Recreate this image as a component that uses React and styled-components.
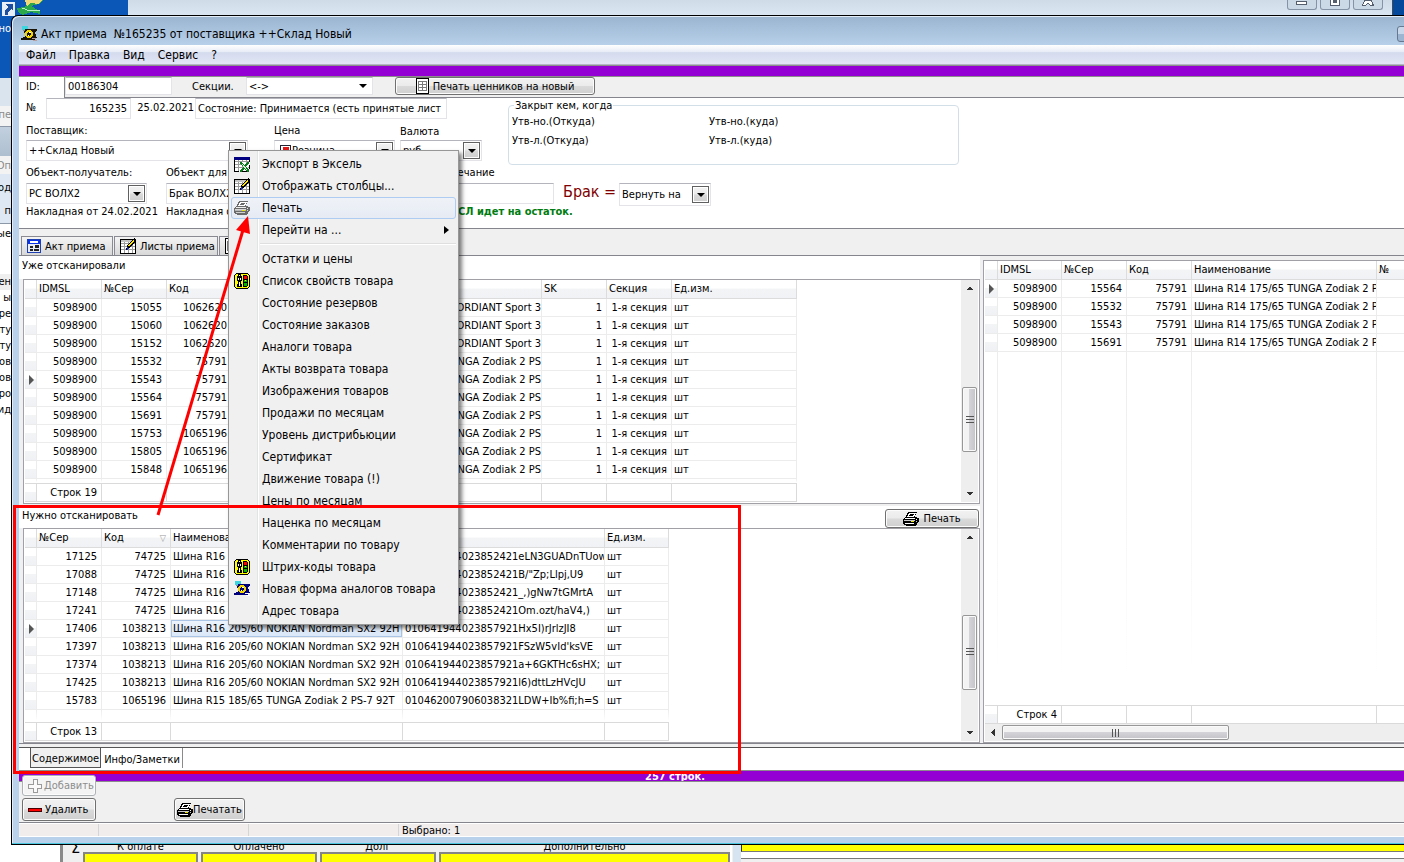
import React from 'react';
import styled, { createGlobalStyle, css } from 'styled-components';

const GlobalStyle = createGlobalStyle`
    * {
        box-sizing: border-box;
    }

    body {
        margin: 0;
        overflow: hidden;
        background: #fff;
    }

    body, button, input, select {
        font-family: 'DejaVu Sans Condensed', 'DejaVu Sans', 'Noto Sans', sans-serif;
        font-size: 11px;
        color: #000;
    }
`;

const face = 'linear-gradient(#f2f2f2 0%, #ebebeb 48%, #dadada 52%, #cfcfcf 100%)';

/* ---------- data ---------- */

const scannedColumns = [
    { title: 'IDMSL', width: 65, right: true },
    { title: '№Сер', width: 65, right: true },
    { title: 'Код', width: 65, right: true },
    { title: 'Наименование', width: 310, tail: true },
    { title: 'SK', width: 65, right: true },
    { title: 'Секция', width: 65, right: true },
    { title: 'Ед.изм.', width: 125 },
];

const cordiant = 'Шина R16 205/55 91T CORDIANT Sport 3';
const tunga = 'Шина R14 175/65 TUNGA Zodiak 2 PS';

const scannedRows = [
    ['15055', '1062620', cordiant],
    ['15060', '1062620', cordiant],
    ['15152', '1062620', cordiant],
    ['15532', '75791', tunga],
    ['15543', '75791', tunga],
    ['15564', '75791', tunga],
    ['15691', '75791', tunga],
    ['15753', '1065196', tunga],
    ['15805', '1065196', tunga],
    ['15848', '1065196', tunga],
].map(([serial, code, name]) => ['5098900', serial, code, name, '1', '1-я секция', 'шт']);

const pendingColumns = [
    { title: '№Сер', width: 65, right: true },
    { title: 'Код', width: 69, right: true, sorted: true },
    { title: 'Наименование', width: 232 },
    { title: 'SK', width: 202 },
    { title: 'Ед.изм.', width: 64 },
];

const nokian = 'Шина R16 205/60 NOKIAN Nordman SX2 92H';

const pendingRows = [
    ['17125', '74725', nokian, '010641944023852421eLN3GUADnTUow', 'шт'],
    ['17088', '74725', nokian, '010641944023852421B/"Zp;Llpj,U9', 'шт'],
    ['17148', '74725', nokian, '010641944023852421_,)gNw7tGMrtA', 'шт'],
    ['17241', '74725', nokian, '010641944023852421Om.ozt/haV4,)', 'шт'],
    ['17406', '1038213', nokian, '010641944023857921Hx5I)rJrlzJI8', 'шт'],
    ['17397', '1038213', nokian, "010641944023857921FSzW5vId'ksVE", 'шт'],
    ['17374', '1038213', nokian, '010641944023857921a+6GKTHc6sHX;', 'шт'],
    ['17425', '1038213', nokian, '010641944023857921l6)dttLzHVcJU', 'шт'],
    ['15783', '1065196', 'Шина R15 185/65 TUNGA Zodiak 2 PS-7 92T', '010462007906038321LDW+Ib%fi;h=S', 'шт'],
];

const sheetColumns = [
    { title: 'IDMSL', width: 64, right: true },
    { title: '№Сер', width: 65, right: true },
    { title: 'Код', width: 65, right: true },
    { title: 'Наименование', width: 185 },
    { title: '№', width: 120 },
];

const sheetRows = ['15564', '15532', '15543', '15691'].map((serial) => ['5098900', serial, '75791', tunga, '']);

const menuItems = [
    { text: 'Экспорт в Эксель', icon: 'excel' },
    { text: 'Отображать столбцы...', icon: 'columns' },
    { text: 'Печать', icon: 'printerGray', active: true },
    { text: 'Перейти на ...', submenu: true },
    null,
    { text: 'Остатки и цены' },
    { text: 'Список свойств товара', icon: 'props' },
    { text: 'Состояние резервов' },
    { text: 'Состояние заказов' },
    { text: 'Аналоги товара' },
    { text: 'Акты возврата товара' },
    { text: 'Изображения товаров' },
    { text: 'Продажи по месяцам' },
    { text: 'Уровень дистрибьюции' },
    { text: 'Сертификат' },
    { text: 'Движение товара (!)' },
    { text: 'Цены по месяцам' },
    { text: 'Наценка по месяцам' },
    { text: 'Комментарии по товару' },
    { text: 'Штрих-коды товара', icon: 'props' },
    { text: 'Новая форма аналогов товара', icon: 'analog' },
    { text: 'Адрес товара' },
];

const backLines = ['ен', 'ы', 'ре', 'ту', 'ту', 'ов', 'ов', 'ро', 'вид'];

/* ---------- icons ---------- */

const Svg = styled.svg`
    display: block;
    flex: none;
    shape-rendering: crispEdges;
`;

function Printer({ gray }) {
    const ink = gray ? '#6a6a6a' : '#000';
    return (
        <Svg width="16" height="14" viewBox="0 0 16 14">
            <path d="M5 0h9v1h-1v2h-1v2h2v1h2v4h-1v1h-1v2h-1v1H3v-1H1v-1H0V7h1V6h1V5h1V3h1V1h1z" fill={ink} />
            <path d="M6 1h7v1h-1v2h-1v1H4V4h1V2h1z" fill="#fff" />
            <path d="M7 2h4v1H7zM6 3h4v1H6z" fill={ink} />
            <path d="M2 6h10v1H2zM13 7h1v1h-1z" fill={gray ? '#eee' : '#fff'} />
            <path d="M1 8h11v1H1zM13 9h1v1h-1z" fill={gray ? '#d8d8d8' : '#c8c8c8'} />
            <path d="M1 9h11v1H1z" fill={gray ? '#b4b4b4' : '#000'} />
            <path d="M2 11h9v1H2z" fill={gray ? '#d0d0d0' : '#fff'} />
            <path d="M8 9h3v1H8z" fill="#e6e200" />
        </Svg>
    );
}

function SheetGrid() {
    return (
        <>
            <path d="M0 1h16v15H0z" fill="#000" />
            <path d="M1 2h14v13H1z" fill="#fff" />
            <path d="M1 5h14v1H1zM1 8h14v1H1zM1 11h14v1H1zM4 2h1v13H4zM8 2h1v13H8zM12 2h1v13h-1z" fill="#9a9a9a" />
        </>
    );
}

function ExcelIcon() {
    return (
        <Svg width="16" height="16" viewBox="0 0 16 16">
            <SheetGrid />
            <path d="M0 1h16v3H0z" fill="#000080" />
            <path d="M5 6h3l3 3 3-3h2v2l-3 3 3 3v2h-3l-3-3-3 3H5v-1l4-4-4-4z" fill="#fff" />
            <path d="M6 6h2l2 3 3-3h2v1l-3 4 3 3v2h-2l-3-3-3 3H6v-1l3-4-3-4z" fill="#0a7a1c" />
            <path d="M8 8l5 6" stroke="#d8f0d8" />
        </Svg>
    );
}

function ColumnsIcon() {
    return (
        <Svg width="16" height="16" viewBox="0 0 16 16">
            <SheetGrid />
            <path d="M1 2h14v2H1z" fill="#c4c4c4" />
            <path d="M14 0l2 1v2l-7 8-3 1 1-4z" fill="#000" />
            <path d="M13 2l1 1-5 6-1-1z" fill="#ffe600" />
            <path d="M7 9l2 2-2 1z" fill="#1a2ccc" />
        </Svg>
    );
}

function PropsIcon() {
    return (
        <Svg width="16" height="16" viewBox="0 0 16 16">
            <path d="M2 0h12v1h1v1h1v12h-1v1h-1v1H2v-1H1v-1H0V2h1V1h1z" fill="#000" />
            <path d="M2 1h12v1h1v12h-1v1H2v-1H1V2h1z" fill="#ff0" />
            <path d="M4 1h3v2h1v5H7v3h1v3H3v-3h1V8H3V3h1z" fill="#000" />
            <path d="M5 2h1v1H5zM4 5h1v2H4zM6 5h1v2H6zM5 9h1v4H5z" fill="#fff" />
            <path d="M9 2h4v1h1v10h-1v1H9z" fill="#000" />
            <path d="M10 3h3v3h-3z" fill="#f00" />
            <path d="M10 7h3v2h-3z" fill="#0b0" />
            <path d="M10 10h3v3h-3z" fill="#0b0" />
            <path d="M11 7h1v1h-1z" fill="#ff0" />
        </Svg>
    );
}

function AnalogIcon({ dark }) {
    const ink = dark ? '#1a1408' : '#00007a';
    return (
        <Svg width="16" height="16" viewBox="0 0 16 16">
            <path d="M1 0h6v4H1z" fill="#3fd5de" />
            <path d="M2 4h6v1H2z" fill="#888" />
            <path d="M4 3h12v2h-1v1h-1v2h1v3h1v1h-5v2H0v-2h2v-1h2V7H3V5h1z" fill={ink} />
            <circle cx="8" cy="8" r="4" fill="#f3d500" />
            <circle cx="8" cy="8" r="2" fill={ink} />
            <path d="M8 6h2v1H8zM7 9h1v1H7z" fill="#fff" />
            <path d="M11 12h4v1h-4zM12 14h4v1h-4z" fill={dark ? '#b9a0a0' : '#fff'} />
            <path d="M11 13h3v1h-3z" fill={ink} />
        </Svg>
    );
}

function FormIcon() {
    return (
        <Svg width="14" height="14" viewBox="0 0 14 14">
            <path d="M0 0h14v14H0z" fill="#1d3fb0" />
            <path d="M1 1h12v4H1z" fill="#0a32e8" />
            <path d="M1 5h12v8H1z" fill="#e8ecf4" />
            <path d="M3 2h8v2H3z" fill="#fff" />
            <path d="M3 7h3v2H3zM8 6h4v3H8zM3 10h3v2H3zM7 10h5v2H7z" fill="#222" />
        </Svg>
    );
}

function ListIcon() {
    return (
        <Svg width="13" height="16" viewBox="0 0 13 16">
            <path d="M0 0h13v16H0z" fill="#000" />
            <path d="M1 1h11v14H1z" fill="#fff" />
            <path d="M2 3h9v10H2z" fill="#7a7a7a" />
            <path d="M3 4h3v2H3zM7 4h3v2H7zM3 7h3v2H3zM7 7h3v2H7zM3 10h3v2H3zM7 10h3v2H7z" fill="#fff" />
        </Svg>
    );
}

function PriceIcon() {
    return (
        <Svg width="11" height="12" viewBox="0 0 11 12">
            <path d="M0 0h11v12H0z" fill="#223" />
            <path d="M1 1h9v10H1z" fill="#fff" />
            <path d="M3 2h6v3H3z" fill="#e01818" />
            <path d="M2 6h2v1H2zM5 6h4v1H5z" fill="#2444aa" />
        </Svg>
    );
}

function PlusIcon() {
    return (
        <Svg width="14" height="14" viewBox="0 0 14 14">
            <path d="M5 .5h4V5h4.500v4H9v4.500H5V9H.5V5H5z" fill="#fafafa" stroke="#9a9a9a" />
        </Svg>
    );
}

function MinusIcon() {
    return (
        <Svg width="14" height="4" viewBox="0 0 14 4">
            <path d="M0 0h14v4H0z" fill="#400" />
            <path d="M1 1h12v2H1z" fill="#f00" />
        </Svg>
    );
}

const menuIcons = {
    excel: <ExcelIcon />,
    columns: <ColumnsIcon />,
    printerGray: <Printer gray />,
    props: <PropsIcon />,
    analog: <AnalogIcon />,
};

/* ---------- desktop and windows behind ---------- */

const Desktop = styled.main`
    position: relative;
    min-height: 100vh;
    overflow: hidden;
    background: linear-gradient(90deg, #0a57b8 0%, #0a57b8 50%, #03489b 100%);
`;

const Shortcut = styled.div`
    position: absolute;
    left: 0;
    top: 0;
    width: 60px;
`;

const ShortcutName = styled.div`
    padding-top: 4px;
    width: 11px;
    overflow: hidden;
    white-space: nowrap;
    display: flex;
    justify-content: flex-end;
    color: #fff;
`;

const TopWindow = styled.section`
    position: absolute;
    left: 128px;
    right: 11px;
    top: 0;
    height: 20px;
    display: flex;
    justify-content: flex-end;
    gap: 3px;
    padding-right: 9px;
    background: linear-gradient(#cfdce8, #dbe7f2 80%);
    border-right: 1px solid #3c4b5c;
`;

const CaptionButton = styled.button`
    width: 30px;
    height: 10px;
    padding: 0;
    display: flex;
    justify-content: center;
    flex: none;
    background: #cbd9e6;
    border: 1px solid #8593a6;
    border-top: 0;
    border-radius: 0 0 3px 3px;
`;

const SideWindow = styled.section`
    position: absolute;
    left: 0;
    top: 78px;
    bottom: 0;
    width: 60px;
    background: #fff;
    display: flex;
    flex-direction: column;
`;

const SideText = styled.div`
    width: 11px;
    height: ${(p) => p.$height}px;
    padding-bottom: ${(p) => p.$below || 0}px;
    flex: none;
    display: flex;
    align-items: flex-end;
    justify-content: flex-end;
    overflow: hidden;
    white-space: nowrap;
    line-height: 16px;
    background: ${(p) => p.$bg || '#fff'};
    color: ${(p) => p.$color || '#000'};
    border-bottom: ${(p) => (p.$line ? '1px solid #8c98a8' : '0')};
`;

const BottomWindow = styled.section`
    position: absolute;
    left: 60px;
    right: 0;
    bottom: 0;
    height: 24px;
    display: flex;
    background: #f0f0f0;
    border-left: 1px solid #8a8a8a;
`;

const Totals = styled.div`
    flex: 0 0 671px;
    display: grid;
    grid-template-columns: 15px 115px 116px 116px 291px;
    gap: 3px;
    padding: 0 0 0 2px;
    border-left: 2px solid #8a8a8a;
    border-right: 2px solid #fff;
`;

const Total = styled.label`
    display: flex;
    flex-direction: column;
    text-align: center;
    line-height: 18px;
    white-space: nowrap;

    input {
        width: 100%;
        height: 14px;
        margin: -4px 0 0;
        background: #ff0;
        border: 2px solid #858585;
        border-bottom: 0;
    }
`;

const Sigma = styled.div`
    padding-top: 1px;
    font-size: 16px;
    line-height: 18px;
    text-align: right;
`;

const BottomRight = styled.div`
    flex: 1;
    margin-left: 1px;
    border-left: 8px solid #d6e3f1;

    &::before {
        content: '';
        display: block;
        height: 13px;
        background: #ff0;
        border-left: 1px solid #333;
        border-bottom: 1px solid #777;
    }

    &::after {
        content: '';
        display: block;
        height: 6px;
        background: #fff;
        border-bottom: 1px solid #777;
    }
`;

/* ---------- main window ---------- */

const Window = styled.section`
    position: absolute;
    left: 11px;
    right: 0;
    top: 15px;
    bottom: 17px;
    display: flex;
    flex-direction: column;
    padding: 0 0 7px 7px;
    background: linear-gradient(#9ab4d0 0, #b9d1ea 30px);
    border: 1px solid #000;
    border-right: 0;
    border-radius: 7px 0 0 0;
    box-shadow: inset 0 -1px #4cc9e0, inset 1px 1px #e4eef8;
`;

const TitleBar = styled.header`
    height: 29px;
    flex: none;
    display: flex;
    align-items: center;
    gap: 4px;
    padding: 6px 0 0 2px;
    overflow: hidden;

    h1 {
        margin: 0;
        flex: 1;
        font-size: 12px;
        font-weight: normal;
        white-space: pre;
    }

    button {
        height: 16px;
        border: 1px solid #65788f;
        border-radius: 3px;
        background: linear-gradient(#c8d8ea 48%, #9db5d0 52%);
        margin-right: -23px;
    }
`;

const Client = styled.div`
    flex: 1;
    min-height: 0;
    display: flex;
    flex-direction: column;
    background: #f0f0f0;
`;

const MenuBar = styled.nav`
    height: 20px;
    flex: none;
    display: flex;
    align-items: center;
    gap: 13px;
    padding-left: 7px;
    font-size: 12px;
    background: linear-gradient(#fff 0%, #e8ecf6 36%, #d4dbed 40%, #e1e5f5 95%);
    border-bottom: 1px solid #b4b8c6;

    button {
        padding: 0;
        border: 0;
        background: none;
        font-size: 12px;
    }
`;

const PurpleBar = styled.div`
    height: 12px;
    flex: none;
    overflow: hidden;
    background: #9400d3;
    border-top: 1px solid #8c8c8c;
    border-bottom: 1px solid #8c8c8c;
    padding-left: 626px;
    color: #fff;
    font-weight: bold;
    line-height: 11px;
`;

const IdBar = styled.div`
    height: 21px;
    flex: none;
    display: flex;
    align-items: flex-start;
    border-bottom: 1px solid #85858d;

    > label {
        line-height: 20px;
    }
`;

const IdTab = styled.label`
    width: 46px;
    height: 21px;
    padding-left: 7px;
    background: #fff;
    border-right: 1px solid #85858d;
`;

const Field = styled.input`
    width: ${(p) => p.$width}px;
    height: ${(p) => p.$height || 20}px;
    margin: 0;
    padding: 0 ${(p) => (p.$right ? 3 : 2)}px;
    flex: none;
    border: 1px solid #e3e3e8;
    border-top-color: #b4b4bc;
    background: #fff;
    text-align: ${(p) => (p.$right ? 'right' : 'left')};
`;

const SectionLabel = styled.label`
    margin: 0 12px 0 20px;
    width: 42px;
`;

const ComboFrame = styled.div`
    width: ${(p) => p.$width}px;
    height: ${(p) => p.$height || 20}px;
    flex: none;
    display: flex;
    align-items: center;
    padding: 0 1px;
    background: #fff;
    border: 1px solid #e3e3e8;
    border-top-color: #b4b4bc;

    select {
        flex: 1;
        min-width: 0;
        height: 100%;
        padding: 0 1px;
        appearance: none;
        border: 0;
        background: none;
        order: 1;
    }

    svg {
        margin-left: 4px;
    }
`;

const ArrowBox = styled.span`
    order: 2;
    width: 17px;
    height: 17px;
    flex: none;
    display: flex;
    align-items: center;
    justify-content: center;
    ${(p) =>
        !p.$flat &&
        css`
            border: 1px solid #606060;
            box-shadow: inset 0 0 0 1px #fff;
            background: ${face};
        `}

    &::after {
        content: '';
        border: 4px solid transparent;
        border-top: 4px solid #000;
        border-bottom: 0;
    }
`;

const PushButton = styled.button`
    width: ${(p) => p.$width}px;
    height: ${(p) => p.$height || 19}px;
    padding: 0 ${(p) => (p.$left ? 5 : 2)}px;
    flex: none;
    display: flex;
    align-items: center;
    justify-content: ${(p) => (p.$left ? 'flex-start' : 'center')};
    gap: ${(p) => p.$gap || 0}px;
    white-space: nowrap;
    border: 1px solid #707070;
    border-radius: 3px;
    box-shadow: inset 0 0 0 1px #fcfcfc;
    background: ${face};

    &:disabled {
        color: #8d8d8d;
        border-color: #adb2b5;
        background: #f4f4f4;
    }
`;

const Header = styled.div`
    flex: none;
    height: 131px;
    padding-left: 7px;
    background: #fff;
    border-bottom: 1px solid #85858d;
    white-space: nowrap;
`;

const HeaderTop = styled.div`
    display: flex;
    height: 64px;
    align-items: flex-start;
`;

const Fields = styled.div`
    width: 456px;
    flex: none;
`;

const Line = styled.div`
    display: flex;
    align-items: ${(p) => p.$align || 'center'};
    height: ${(p) => p.$height}px;
`;

const Cell = styled.div`
    width: ${(p) => p.$width}px;
    flex: none;
    line-height: 20px;
`;

const Note = styled.strong`
    color: #007c10;
`;

const Defect = styled.label`
    margin: 0 3px 0 9px;
    width: 53px;
    font-size: 16px;
    line-height: 18px;
    color: #800000;
`;

const Closed = styled.fieldset`
    width: 451px;
    height: 66px;
    margin: 1px 0 0 26px;
    padding: 3px;
    display: grid;
    grid-template-columns: 197px 1fr;
    grid-auto-rows: 19px;
    border: 1px solid #d3dfe8;
    border-radius: 4px;

    legend {
        margin-left: 2px;
        padding: 0 1px;
        line-height: 13px;
    }
`;

const Tabs = styled.div`
    height: 27px;
    flex: none;
    display: flex;
    align-items: flex-end;
    padding-left: 2px;
    border-bottom: 1px solid #85858d;
`;

const Tab = styled.button`
    width: ${(p) => p.$width}px;
    height: 19px;
    padding: 0 5px;
    display: flex;
    align-items: center;
    gap: 4px;
    white-space: nowrap;
    border: 1px solid #8a8a92;
    border-bottom: 0;
    margin-right: 1px;
    background: linear-gradient(#f4f4f4, #d8d8d8);
`;

const Work = styled.div`
    flex: 1;
    min-height: 0;
    display: flex;
    gap: 3px;
`;

const LeftPane = styled.div`
    flex: 0 0 961px;
    min-height: 0;
    display: flex;
    flex-direction: column;
`;

const PaneTitle = styled.div`
    height: ${(p) => p.$height}px;
    margin-top: ${(p) => p.$gap || 0}px;
    flex: none;
    display: flex;
    align-items: flex-end;
    justify-content: space-between;
    padding: 0 1px 0 3px;
    background: #fff;

    h2 {
        margin: 0;
        align-self: flex-start;
        font-size: 11px;
        line-height: 20px;
        font-weight: normal;
    }
`;

const GridBox = styled.div`
    flex: ${(p) => p.$grow || 'none'};
    height: ${(p) => (p.$height ? `${p.$height}px` : 'auto')};
    min-height: 0;
    display: flex;
    flex-direction: ${(p) => (p.$column ? 'column' : 'row')};
    justify-content: space-between;
    padding: ${(p) => (p.$column ? '0 0 1px 1px' : '0 1px 1px')};
    margin-left: ${(p) => p.$indent || 0}px;
    background: #fff;
    border: 1px solid #a0a0a6;
    border-right-width: ${(p) => (p.$column ? 0 : 1)}px;
    overflow: hidden;
`;

const TableArea = styled.div`
    flex: 1;
    min-height: 0;
    min-width: 0;
`;

const Table = styled.table`
    height: 100%;
    table-layout: fixed;
    border-collapse: separate;
    border-spacing: 0;

    th, td {
        height: 18px;
        padding: 0 0 0 2px;
        line-height: 14px;
        font-weight: normal;
        text-align: left;
        white-space: nowrap;
        overflow: hidden;
        border: 0 solid #ececec;
        border-width: 0 1px 1px 0;
    }

    th {
        height: 19px;
        padding-right: 4px;
        border-color: #dcdcdc;
        background: linear-gradient(#fff 45%, #f3f4f6 50%, #f1f2f5);
    }

    tfoot td {
        height: 19px;
        padding-right: 4px;
        border-color: #dadada;
        border-top-width: 1px;
        text-align: right;
    }
`;

const Td = styled.td`
    && {
        text-align: ${(p) => (p.$right || p.$tail ? 'right' : 'left')};
        ${(p) => p.$right && 'padding-right: 4px;'}
        ${(p) => p.$tail && 'padding: 0;'}
        ${(p) =>
            p.$selected &&
            css`
                background: linear-gradient(#eef4fc, #d9e7f8);
                box-shadow: inset 0 0 0 1px #a9c4e4;
            `}
    }
`;

const Marker = styled.td`
    && {
        padding: 0 0 0 4px;
        background: linear-gradient(#fff 45%, #f3f4f6 50%, #eff1f4);
    }

    span {
        display: block;
        width: 0;
        border: 5px solid transparent;
        border-left-color: #555;
        border-right: 0;
    }
`;

const FillerRow = styled.tr`
    && td {
        height: auto;
        padding: 0;
        border-width: 0;
        background: linear-gradient(#ececec, #fff 92%) right / 1px 100% no-repeat;
    }
`;

const SortMark = styled.span`
    float: right;
    font-size: 9px;
    color: #999;
`;

const ScrollTrack = styled.div`
    flex: none;
    display: flex;
    flex-direction: ${(p) => (p.$across ? 'row' : 'column')};
    ${(p) => (p.$across ? 'height: 17px;' : 'width: 17px;')}
    align-items: center;
    background: #eee;
`;

const ScrollArrow = styled.button`
    width: 17px;
    height: 17px;
    padding: 0;
    flex: none;
    display: flex;
    align-items: center;
    justify-content: center;
    border: 0;
    background: none;
`;

const Thumb = styled.div`
    flex: none;
    display: flex;
    align-items: center;
    justify-content: center;
    border: 1px solid #979797;
    border-radius: 2px;
    box-shadow: inset 0 0 0 1px #fafafa;
    ${(p) =>
        p.$across
            ? css`
                width: ${p.$size}px;
                height: 15px;
                background: linear-gradient(#f3f3f3 45%, #d4d4d8 50%, #c4c4c8);
            `
            : css`
                width: 15px;
                height: ${p.$size}px;
                background: linear-gradient(90deg, #f3f3f3 45%, #d4d4d8 50%, #c4c4c8);
            `}
`;

const Spacer = styled.div`
    flex: ${(p) => p.$part};
`;

const RightPane = styled.div`
    flex: 1;
    min-width: 0;
    display: flex;
    flex-direction: column;
    padding-top: 4px;
    overflow: hidden;
`;

const PageTabs = styled.div`
    height: 23px;
    flex: none;
    display: flex;
    align-items: flex-start;
    margin-top: 4px;
    padding-left: 11px;
    background: #fff;
    border-top: 1px solid #555;
    box-shadow: 0 -3px #f0f0f0, 0 -4px #85858d;

    button {
        height: 20px;
        padding: 2px 2px 0 3px;
        background: #fff;
        border: 0;
        border-right: 1px solid #8a8a8a;
    }

    button:first-child {
        padding: 2px 1px 0;
        background: #f0f0f0;
        border: 1px solid #555;
        border-top: 0;
    }
`;

const Actions = styled.div`
    flex: none;
    height: 48px;
    margin-top: -7px;
    display: grid;
    grid-template-columns: 74px 71px;
    grid-template-rows: 21px 23px;
    row-gap: 2px;
    column-gap: 78px;
    padding-left: 3px;
    border-bottom: 1px solid #85858d;

    button:nth-child(2) {
        grid-row: 2;
    }

    button:nth-child(3) {
        grid-row: 2;
    }
`;

const StatusBar = styled.footer`
    height: 14px;
    flex: none;
    display: flex;
    background: #f1edec;
    border-top: 1px solid #fff;
    border-bottom: 1px solid #fff;

    span {
        width: 150px;
        padding-left: 3px;
        line-height: 14px;
        border-right: 1px solid #d5d5d5;
    }

    span:first-child {
        width: 80px;
    }

    span:last-child {
        flex: 1;
        border: 0;
    }
`;

/* ---------- popup menu ---------- */

const Popup = styled.div`
    position: absolute;
    left: 228px;
    top: 150px;
    width: 231px;
    padding: 2px;
    background: linear-gradient(90deg, #f0f0f0 28px, #e2e3e3 28px, #e2e3e3 29px, #fff 29px, #fff 30px, #f0f0f0 30px);
    border: 1px solid #979797;
    box-shadow: 3px 3px 4px rgba(0, 0, 0, 0.5);

    hr {
        height: 2px;
        margin: 2px 0 3px 29px;
        border: 0;
        border-top: 1px solid #dfdfdf;
        border-bottom: 1px solid #fff;
    }
`;

const PopupItem = styled.button`
    width: 100%;
    height: 22px;
    padding: 0 6px 0 2px;
    display: flex;
    align-items: center;
    font-size: 12px;
    text-align: left;
    border: 1px solid ${(p) => (p.$active ? '#aeccf1' : 'transparent')};
    border-radius: 3px;
    background: ${(p) => (p.$active ? 'linear-gradient(#eff2f7, #e6ebf4)' : 'none')};
`;

const PopupIcon = styled.span`
    width: 28px;
    flex: none;
`;

const SubArrow = styled.span`
    margin-left: auto;
    border: 4px solid transparent;
    border-left: 5px solid #000;
    border-right: 0;
`;

const Markup = styled.svg`
    position: absolute;
    left: 0;
    top: 0;
    pointer-events: none;
`;

function Combo({ id, label, width, height, value, flat, icon }) {
    return (
        <ComboFrame $width={width} $height={height}>
            {icon}
            <select id={id} aria-label={label}>
                <option>{value}</option>
            </select>
            <ArrowBox $flat={flat} />
        </ComboFrame>
    );
}

function Arrow({ d }) {
    return (
        <Svg width="7" height="7" viewBox="0 0 7 7">
            <path d={d} fill="#333" />
        </Svg>
    );
}

function ScrollBar({ across, before, after, size }) {
    return (
        <ScrollTrack $across={across}>
            <ScrollArrow aria-label="Назад">
                <Arrow d={across ? 'M5 0v7L1 4V3z' : 'M0 5h7L4 2H3z'} />
            </ScrollArrow>
            <Spacer $part={before} />
            <Thumb $across={across} $size={size}>
                <Svg width="8" height="8" viewBox="0 0 8 8">
                    <path d={across ? 'M0 0h1v8H0zM3 0h1v8H3zM6 0h1v8H6z' : 'M0 0h8v1H0zM0 3h8v1H0zM0 6h8v1H0z'} fill="#555" />
                </Svg>
            </Thumb>
            <Spacer $part={after} />
            {!across && (
                <ScrollArrow aria-label="Вперёд">
                    <Arrow d="M0 2h7L4 5H3z" />
                </ScrollArrow>
            )}
        </ScrollTrack>
    );
}

function DataTable({ columns, rows, current, selected, footer, footerAt = 0, marker = 12 }) {
    const total = columns.reduce((sum, c) => sum + c.width, marker);
    return (
        <TableArea>
            <Table style={{ width: total }}>
                <colgroup>
                    <col style={{ width: marker }} />
                    {columns.map((c) => (
                        <col key={c.title} style={{ width: c.width }} />
                    ))}
                </colgroup>
                <thead>
                    <tr>
                        <th />
                        {columns.map((c) => (
                            <th key={c.title} scope="col">
                                {c.title}
                                {c.sorted && <SortMark>▽</SortMark>}
                            </th>
                        ))}
                    </tr>
                </thead>
                <tbody>
                    {rows.map((row, r) => (
                        <tr key={row[0] + row[1]}>
                            <Marker>{r === current && <span />}</Marker>
                            {row.map((value, i) => (
                                <Td
                                    key={columns[i].title}
                                    $right={columns[i].right}
                                    $tail={columns[i].tail}
                                    $selected={r === current && i === selected}
                                >
                                    {value}
                                </Td>
                            ))}
                        </tr>
                    ))}
                    <FillerRow>
                        <td />
                        {columns.map((c) => (
                            <td key={c.title} />
                        ))}
                    </FillerRow>
                </tbody>
                <tfoot>
                    <tr>
                        <Marker />
                        {columns.map((c, i) => (
                            <td key={c.title}>{i === footerAt ? footer : ''}</td>
                        ))}
                    </tr>
                </tfoot>
            </Table>
        </TableArea>
    );
}

function Background() {
    return (
        <>
            <Shortcut>
                <Svg width="45" height="18" viewBox="0 0 45 18">
                    <path d="M17 8l8-1 6-7h12l-4 4-8 2 9 5v3l-9-2-8 3-5-3z" fill="#2aa84a" />
                    <path d="M25 0h18l-5 4-7-1-4 3z" fill="#f0d878" />
                    <path d="M22 8l8 3 10-1" stroke="#b8f0c8" fill="none" />
                    <path d="M2 2h13v14H2z" fill="#e8eef8" />
                    <path d="M6 4h7v7l-2-2-3 3v3H5v-4l3-4-2-2z" fill="#1c4ea0" />
                </Svg>
                <ShortcutName>но</ShortcutName>
            </Shortcut>
            <TopWindow>
                <CaptionButton aria-label="Свернуть">
                    <Svg width="12" height="8" viewBox="0 0 12 8">
                        <path d="M.5 1.500h10v3H.5z" fill="#fff" stroke="#555e6c" />
                    </Svg>
                </CaptionButton>
                <CaptionButton aria-label="Развернуть">
                    <Svg width="12" height="8" viewBox="0 0 12 8">
                        <path d="M1 0h10v6H1z" fill="#555e6c" />
                        <path d="M2 0h8v5H2z" fill="#fff" />
                        <path d="M4 0h4v3H4z" fill="#555e6c" />
                    </Svg>
                </CaptionButton>
                <CaptionButton aria-label="Закрыть">
                    <Svg width="12" height="8" viewBox="0 0 12 8">
                        <path d="M3 0l-2.500 5.500h3L6 3l2.500 2.500h3L9 0z" fill="#fff" stroke="#555e6c" />
                    </Svg>
                </CaptionButton>
            </TopWindow>
            <SideWindow>
                <SideText $height={28} $bg="#d9e4ee" />
                <SideText $height={21} $below={3} $bg="#f3f3f3" $color="#8a8a8a" $line>пе</SideText>
                <SideText $height={29} $bg="linear-gradient(#c2d0de, #aebfd0)" />
                <SideText $height={18} $bg="#f3f3f3" $color="#8a8a8a">Оп</SideText>
                <SideText $height={22} $bg="#dde8f4">од</SideText>
                <SideText $height={28} $below={4} $bg="#dde8f4" $line>п</SideText>
                <SideText $height={18}>ые</SideText>
                <SideText $height={32} />
                {backLines.map((text, i) => (
                    <SideText key={i} $height={16} $bg={i ? '#fff' : '#efefef'}>{text}</SideText>
                ))}
            </SideWindow>
            <BottomWindow>
                <Totals>
                    <Sigma>Σ</Sigma>
                    {['К оплате', 'Оплачено', 'Долг', 'Дополнительно'].map((name) => (
                        <Total key={name}>
                            {name}
                            <input />
                        </Total>
                    ))}
                </Totals>
                <BottomRight />
            </BottomWindow>
        </>
    );
}

function DocumentHeader() {
    return (
        <Header>
            <HeaderTop>
                <Fields>
                    <Line $height={24} $align="flex-start">
                        <Cell as="label" htmlFor="number" $width={20}>№</Cell>
                        <Field id="number" $width={85} $height={21} $right defaultValue="165235" />
                        <Cell $width={64}>&nbsp;&nbsp;25.02.2021</Cell>
                        <Field aria-label="Состояние" $width={252} $height={21} defaultValue="Состояние: Принимается (есть принятые лист" />
                    </Line>
                    <Line $height={18}>
                        <Cell as="label" htmlFor="supplier" $width={248}>Поставщик:</Cell>
                        <Cell as="label" htmlFor="price" $width={126}>Цена</Cell>
                        <label htmlFor="currency">Валюта</label>
                    </Line>
                    <Line $height={22} $align="flex-start">
                        <Combo id="supplier" width={222} height={21} value="++Склад Новый" />
                        <Spacer $part={1} />
                        <Combo id="price" width={121} height={21} value="Розница" icon={<PriceIcon />} />
                        <Cell $width={5} />
                        <Combo id="currency" width={82} height={21} value="руб." />
                    </Line>
                </Fields>
                <Closed>
                    <legend>Закрыт кем, когда</legend>
                    <span>Утв-но.(Откуда)</span>
                    <span>Утв-но.(куда)</span>
                    <span>Утв-л.(Откуда)</span>
                    <span>Утв-л.(куда)</span>
                </Closed>
            </HeaderTop>
            <Line $height={21}>
                <Cell as="label" htmlFor="receiver" $width={140}>Объект-получатель:</Cell>
                <Cell as="label" htmlFor="defect" $width={264}>Объект для</Cell>
                <label htmlFor="remark">Примечание</label>
            </Line>
            <Line $height={21} $align="flex-start">
                <Combo id="receiver" width={121} height={21} value="РС ВОЛХ2" />
                <Cell $width={19} />
                <Combo id="defect" width={130} height={21} value="Брак ВОЛХ2" />
                <Cell $width={14} />
                <Field id="remark" $width={244} $height={21} />
                <Defect htmlFor="brak">Брак =</Defect>
                <Combo id="brak" width={92} height={23} value="Вернуть на" />
            </Line>
            <Line $height={15}>
                <Cell $width={140}>Накладная от 24.02.2021</Cell>
                <Cell $width={292}>Накладная от</Cell>
                <Note>СЛ идет на остаток.</Note>
            </Line>
        </Header>
    );
}

function ContextMenu() {
    return (
        <Popup role="menu">
            {menuItems.map((item, i) =>
                item ? (
                    <PopupItem key={item.text} role="menuitem" $active={item.active}>
                        <PopupIcon>{menuIcons[item.icon]}</PopupIcon>
                        {item.text}
                        {item.submenu && <SubArrow />}
                    </PopupItem>
                ) : (
                    <hr key={i} />
                )
            )}
        </Popup>
    );
}

function App() {
    return (
        <Desktop>
            <GlobalStyle />
            <Background />
            <Window>
                <TitleBar>
                    <AnalogIcon dark />
                    <h1>{'Акт приема  №165235 от поставщика ++Склад Новый'}</h1>
                    <CaptionButton aria-label="Свернуть" />
                </TitleBar>
                <Client>
                    <MenuBar>
                        {['Файл', 'Правка', 'Вид', 'Сервис', '?'].map((name) => (
                            <button key={name}>{name}</button>
                        ))}
                    </MenuBar>
                    <PurpleBar />
                    <IdBar>
                        <IdTab htmlFor="doc-id">ID:</IdTab>
                        <Field id="doc-id" $width={107} $height={18} defaultValue="00186304" />
                        <SectionLabel htmlFor="sections">Секции.</SectionLabel>
                        <Combo id="sections" width={127} height={18} value="<->" flat />
                        <Cell $width={22} />
                        <PushButton $width={200} $height={18} $gap={4}>
                            <ListIcon />
                            Печать ценников на новый
                        </PushButton>
                    </IdBar>
                    <DocumentHeader />
                    <Tabs>
                        <Tab $width={92}><FormIcon />Акт приема</Tab>
                        <Tab $width={104}><ColumnsIcon />Листы приема</Tab>
                        <Tab $width={92} aria-label="Список"><ListIcon /></Tab>
                    </Tabs>
                    <Work>
                        <LeftPane>
                            <PaneTitle $height={23}>
                                <h2>Уже отсканировали</h2>
                            </PaneTitle>
                            <GridBox $height={225} $indent={4}>
                                <DataTable columns={scannedColumns} rows={scannedRows} current={4} footer="Строк 19" />
                                <ScrollBar before={90} after={33} size={65} />
                            </GridBox>
                            <PaneTitle $height={22} $gap={2}>
                                <h2>Нужно отсканировать</h2>
                                <PushButton $width={94} $gap={4}>
                                    <Printer />
                                    Печать
                                </PushButton>
                            </PaneTitle>
                            <GridBox $grow={1} $indent={4}>
                                <DataTable columns={pendingColumns} rows={pendingRows} current={4} selected={2} footer="Строк 13" />
                                <ScrollBar before={70} after={35} size={75} />
                            </GridBox>
                        </LeftPane>
                        <RightPane>
                            <GridBox $grow={1} $column>
                                <DataTable columns={sheetColumns} rows={sheetRows} current={0} footer="Строк 4" marker={13} />
                                <ScrollBar across before={0} after={1} size={227} />
                            </GridBox>
                        </RightPane>
                    </Work>
                    <PageTabs>
                        <button>Содержимое</button>
                        <button>Инфо/Заметки</button>
                    </PageTabs>
                    <PurpleBar>257 строк.</PurpleBar>
                    <Actions>
                        <PushButton $width={74} $height={21} $gap={2} $left disabled>
                            <PlusIcon />
                            <span><u>Д</u>обавить</span>
                        </PushButton>
                        <PushButton $width={74} $height={23} $gap={3} $left>
                            <MinusIcon />
                            Удалить
                        </PushButton>
                        <PushButton $width={71} $height={23}>
                            <Printer />
                            Печатать
                        </PushButton>
                    </Actions>
                    <StatusBar>
                        <span />
                        <span />
                        <span />
                        <span>Выбрано: 1</span>
                    </StatusBar>
                </Client>
            </Window>
            <ContextMenu />
            <Markup width="760" height="790" viewBox="0 0 760 790">
                <rect x="14.500" y="506.500" width="725" height="266" fill="none" stroke="#f00" strokeWidth="3" />
                <path d="M158 515L243 230" stroke="#f00" strokeWidth="3" />
                <path d="M248 216l2 18-14-4z" fill="#f00" />
            </Markup>
        </Desktop>
    );
}

export default App;
